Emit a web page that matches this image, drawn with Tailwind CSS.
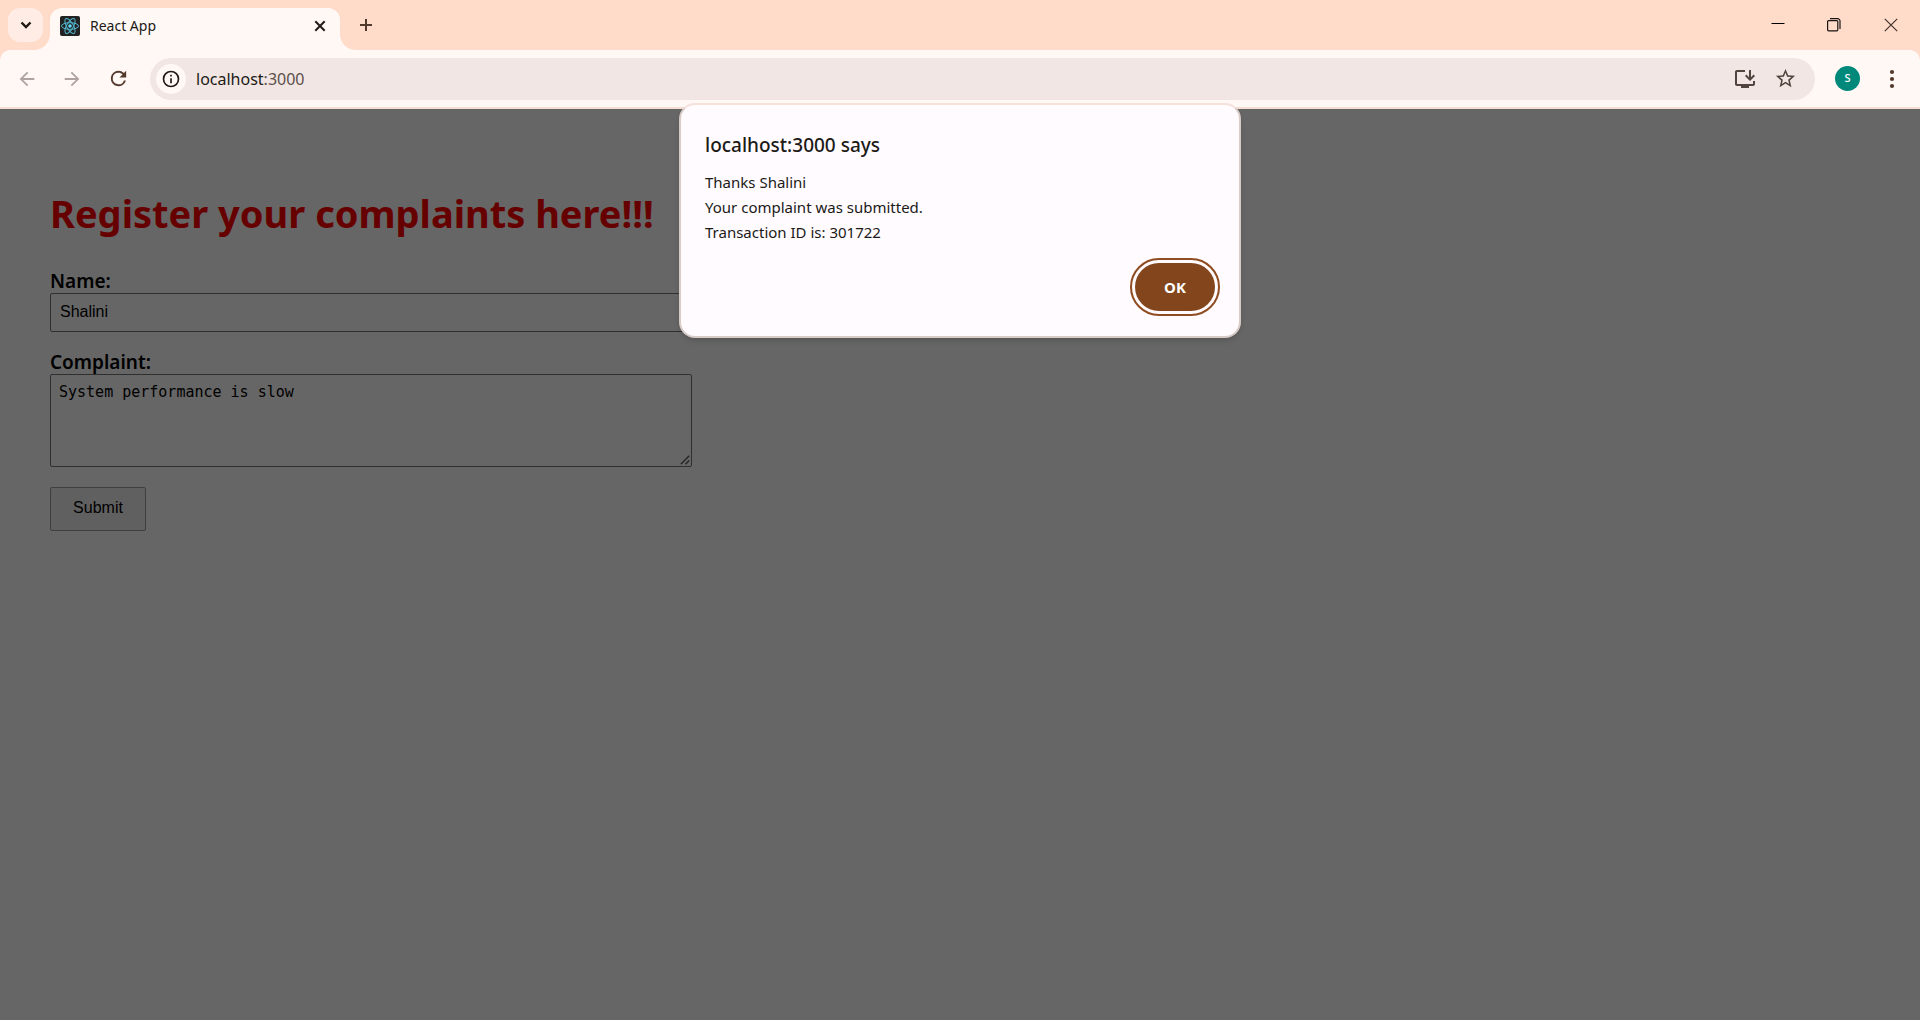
<!DOCTYPE html>
<html lang="en">
<head>
<meta charset="utf-8">
<meta name="viewport" content="width=device-width, initial-scale=1">
<title>React App</title>
<script src="https://cdn.jsdelivr.net/npm/@tailwindcss/browser@4"></script>
</head>
<body class="flex min-h-screen flex-col bg-[#666666] font-['Noto_Sans',sans-serif] text-[#201a17]">

  <header class="relative">
    <!-- Tab strip -->
    <div class="flex h-[50px] items-center bg-[#ffdbc9] pl-2">
      <button type="button" aria-label="Search tabs" class="flex h-[34px] w-[35px] items-center justify-center rounded-xl bg-[#ffede5]">
        <svg class="size-[18px]" viewBox="0 0 18 18" fill="none" stroke="#201a17" stroke-width="2.4"><path d="M4.500 6.500 9 11l4.500-4.500"/></svg>
      </button>
      <div class="relative ml-[7px] flex h-[42px] w-[290px] items-center self-end rounded-t-xl bg-[#fff8f5] pr-3 pb-[6px] pl-[10px]">
        <svg class="absolute bottom-0 -left-4 size-4" viewBox="0 0 16 16" fill="#fff8f5"><path d="M16 0v16H0C9 16 16 9 16 0z"/></svg>
        <svg class="absolute -right-4 bottom-0 size-4" viewBox="0 0 16 16" fill="#fff8f5"><path d="M0 0v16h16C7 16 0 9 0 0z"/></svg>
        <svg class="size-5 shrink-0" viewBox="0 0 20 20" fill="none">
          <rect width="20" height="20" rx="2" fill="#222222"/>
          <g stroke="#53b9d1" stroke-width="1">
            <ellipse cx="10" cy="10" rx="8.500" ry="3.300"/>
            <ellipse cx="10" cy="10" rx="8.500" ry="3.300" transform="rotate(60 10 10)"/>
            <ellipse cx="10" cy="10" rx="8.500" ry="3.300" transform="rotate(120 10 10)"/>
          </g>
          <circle cx="10" cy="10" r="1.800" fill="#61dafb"/>
        </svg>
        <span class="ml-[10px] flex-1 text-sm">React App</span>
        <button type="button" aria-label="Close tab" class="flex size-4 items-center justify-center">
          <svg class="size-4" viewBox="0 0 16 16" fill="none" stroke="#201a17" stroke-width="2"><path d="M3.300 3.300l9.400 9.400M12.700 3.300l-9.400 9.400"/></svg>
        </button>
      </div>
      <button type="button" aria-label="New tab" class="ml-3 flex size-7 items-center justify-center">
        <svg class="size-4" viewBox="0 0 16 16" fill="none" stroke="#53392c" stroke-width="2"><path d="M8 2v12M2 8h12"/></svg>
      </button>
      <div class="ml-auto flex h-full">
        <button type="button" aria-label="Minimize" class="flex w-14 items-center justify-center">
          <svg class="size-[14px]" viewBox="0 0 14 14" fill="none" stroke="#000" stroke-width="1"><path d="M0.500 5.500h13"/></svg>
        </button>
        <button type="button" aria-label="Restore" class="flex w-14 items-center justify-center">
          <svg class="size-[14px]" viewBox="0 0 14 14" fill="none" stroke="#1a1512" stroke-width="1.200"><rect x=".6" y="2.600" width="10.200" height="10.200" rx="1"/><path d="M3 .6h7.500a2.500 2.500 0 0 1 2.500 2.500V11"/></svg>
        </button>
        <button type="button" aria-label="Close window" class="flex w-[58px] items-center justify-center">
          <svg class="size-[14px]" viewBox="0 0 14 14" fill="none" stroke="#40332c" stroke-width="1.200"><path d="M.8.8l12.400 12.400M13.200.8.8 13.200"/></svg>
        </button>
      </div>
    </div>

    <!-- Toolbar -->
    <div class="bg-[#ffdbc9]">
      <div class="flex h-[59px] items-center rounded-t-[10px] border-b-2 border-[#f5ded4] bg-[#fff8f5] pl-[5px]">
        <button type="button" aria-label="Back" class="flex h-9 w-11 items-center justify-center">
          <svg class="size-[22px]" viewBox="0 0 24 24" fill="#aea3a0"><path d="M20 11H7.830l5.590-5.590L12 4l-8 8 8 8 1.410-1.410L7.830 13H20v-2z"/></svg>
        </button>
        <button type="button" aria-label="Forward" class="flex h-9 w-[46px] items-center justify-center">
          <svg class="size-[22px]" viewBox="0 0 24 24" fill="#aea3a0"><path d="M12 4l-1.410 1.410L16.170 11H4v2h12.170l-5.580 5.590L12 20l8-8z"/></svg>
        </button>
        <button type="button" aria-label="Reload" class="flex h-9 w-[46px] items-center justify-center">
          <svg class="size-[23px]" viewBox="0 0 24 24" fill="#53392c"><path d="M17.650 6.350A7.950 7.950 0 0 0 12 4a8 8 0 1 0 7.730 10h-2.080A6 6 0 1 1 12 6c1.660 0 3.140.69 4.220 1.780L13 11h7V4l-2.350 2.350z"/></svg>
        </button>
        <div class="ml-[9px] flex h-[42px] flex-1 items-center rounded-full bg-[#f1e6e3] pr-[18px] pl-[6px]">
          <button type="button" aria-label="View site information" class="flex size-[30px] items-center justify-center rounded-full bg-[#fff8f5]">
            <svg class="size-5" viewBox="0 0 24 24" fill="#201a17"><path d="M11 7h2v2h-2zm0 4h2v6h-2zm1-9a10 10 0 1 0 0 20 10 10 0 0 0 0-20zm0 18a8 8 0 1 1 0-16 8 8 0 0 1 0 16z"/></svg>
          </button>
          <div role="textbox" aria-label="Address" class="ml-[10px] flex-1 text-base">localhost<span class="text-[#5c504b]">:3000</span></div>
          <button type="button" aria-label="Install app" class="flex w-10 items-center justify-center">
            <svg class="size-6" viewBox="0 0 24 24" fill="#51443e"><path d="M20 17H4V5h8V3H4c-1.110 0-2 .89-2 2v12c0 1.100.89 2 2 2h4v2h8v-2h4c1.100 0 2-.9 2-2v-3h-2v3z"/><path d="M17 14l5-5-1.410-1.410L18 10.170V3h-2v7.170l-2.590-2.580L12 9z"/></svg>
          </button>
          <button type="button" aria-label="Bookmark this tab" class="-mr-1 ml-1 flex w-8 items-center justify-center">
            <svg class="size-[23px]" viewBox="0 0 24 24" fill="#51443e"><path d="M22 9.240l-7.190-.62L12 2 9.190 8.630 2 9.240l5.460 4.730L5.820 21 12 17.270 18.180 21l-1.630-7.030L22 9.240zM12 15.400l-3.760 2.270 1-4.280-3.320-2.880 4.380-.38L12 6.100l1.710 4.040 4.380.38-3.320 2.880 1 4.280L12 15.400z"/></svg>
          </button>
        </div>
        <button type="button" aria-label="Profile" class="ml-5 flex size-[25px] items-center justify-center rounded-full bg-[#00897b] text-[11px] font-medium text-white">S</button>
        <button type="button" aria-label="Menu" class="ml-5 mr-4 flex size-6 items-center justify-center">
          <svg class="size-6" viewBox="0 0 24 24" fill="#53392c"><circle cx="12" cy="5" r="2.100"/><circle cx="12" cy="12" r="2.100"/><circle cx="12" cy="19" r="2.100"/></svg>
        </button>
      </div>
    </div>

    <!-- Alert dialog hanging from the toolbar -->
    <div role="alertdialog" aria-labelledby="dialog-title" aria-describedby="dialog-text" class="absolute top-[103px] left-1/2 z-10 flex w-[562px] -translate-x-1/2 flex-col rounded-2xl border-2 border-[#f5e0da] border-x-[#d8cbc6] border-b-[#d8cbc6] bg-[#fffbff] px-6 pt-6 pb-5 shadow-md">
      <h2 id="dialog-title" class="text-[19px] leading-8 font-medium">localhost:3000 says</h2>
      <p id="dialog-text" class="mt-[9px] text-[15px] leading-[25px]">Thanks Shalini<br>Your complaint was submitted.<br>Transaction ID is: 301722</p>
      <button type="button" class="mt-[13px] -mr-[5px] h-[58px] w-[90px] self-end rounded-full border-2 border-[#8f4c20] bg-[#fffbff] p-[3px]">
        <span class="flex h-full items-center justify-center rounded-full bg-[#83461c] text-[15px] font-bold text-white">OK</span>
      </button>
    </div>
  </header>

  <main class="px-[50px] pt-[76px] text-black">
    <h1 class="text-[38px] leading-[56px] font-bold text-[#660000]">Register your complaints here!!!</h1>
    <form class="mt-7 flex max-w-[642px] flex-col items-start">
      <label for="name" class="text-[19px] leading-6 font-semibold">Name:</label>
      <input id="name" type="text" value="Shalini" class="h-[39px] w-full rounded-xs border border-[#2f2f2f] px-[9px] pb-[2px] font-['Liberation_Sans',sans-serif] text-base">
      <label for="complaint" class="mt-[18px] text-[19px] leading-6 font-semibold">Complaint:</label>
      <div class="relative flex w-full">
        <textarea id="complaint" class="h-[93px] w-full resize-none rounded-xs border border-[#2f2f2f] px-2 py-[7px] font-['DejaVu_Sans_Mono',monospace] text-[15px] leading-5">System performance is slow</textarea>
        <!-- Resize grip -->
        <svg class="pointer-events-none absolute right-[2px] bottom-[2px] size-[10px]" viewBox="0 0 10 10" fill="none" stroke="#222" stroke-width="1.300"><path d="M.8 9.200 9.200.8M5.500 9.200 9.200 5.500"/></svg>
      </div>
      <button type="button" class="mt-5 h-11 w-24 rounded-xs border border-[#3f3f3f] bg-[#606060] pb-[2px] font-['Liberation_Sans',sans-serif] text-base">Submit</button>
    </form>
  </main>
</body>
</html>
